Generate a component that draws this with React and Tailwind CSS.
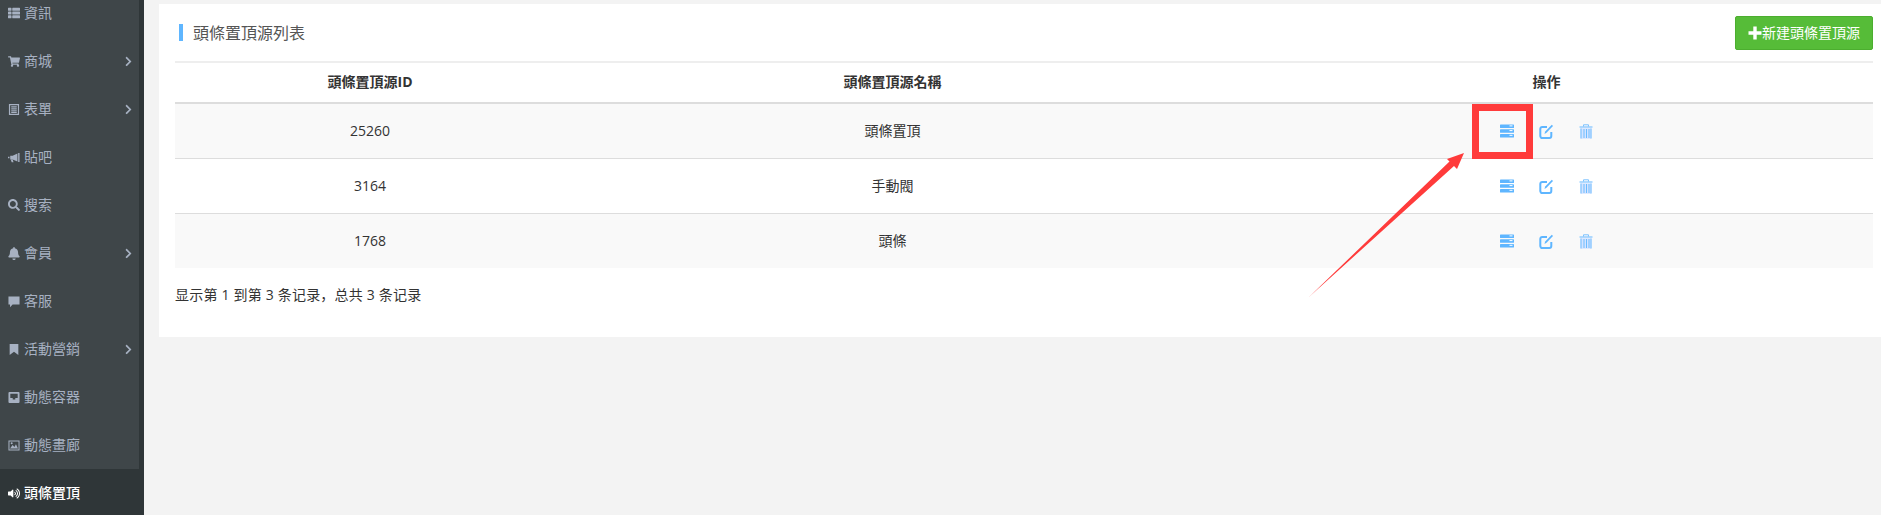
import React from "react";
import { FaThList, FaShoppingCart, FaBell, FaSearch, FaVolumeUp, FaChevronRight } from "react-icons/fa";

const S = ({ children }) => (
  <svg width="13" height="13" viewBox="0 0 13 13" fill="currentColor">{children}</svg>
);

const ListAlt = () => (
  <S>
    <path fillRule="evenodd" d="M1 0.5h11v12H1zM2.3 1.8v9.4h8.4V1.8z" />
    <path d="M3.5 3h6v1.2h-6zM3.5 5.2h6v1.2h-6zM3.5 7.4h6v1.2h-6zM3.5 9.2h6v1h-6z" />
  </S>
);
const Horn = () => (
  <S>
    <path d="M11 1.5h1.5v10H11zM10.2 2.2v8.6L5 8.6H2.4V4.6H5zM0 5.6h1.6v1.8H0zM3 9h2.2l.8 2.6H4z" />
  </S>
);
const Comment = () => (
  <S>
    <path d="M0.5 1h12v8.8H5L2.2 12.6V9.8H0.5z" />
  </S>
);
const Bookmark = () => (
  <S>
    <path d="M1.8 0.5h9.4v12L6.5 9l-4.7 3.5z" />
  </S>
);
const Inbox = () => (
  <S>
    <path fillRule="evenodd" d="M1.6 0.5h9.8a1.1 1.1 0 0 1 1.1 1.1v9.8a1.1 1.1 0 0 1-1.1 1.1H1.6a1.1 1.1 0 0 1-1.1-1.1V1.6a1.1 1.1 0 0 1 1.1-1.1zM2.5 2.5v4.6h2.6v1.6h2.8V7.1h2.6V2.5z" />
  </S>
);
const Picture = () => (
  <S>
    <path fillRule="evenodd" d="M0.5 1h12v11h-12zM1.6 2.1v8.8h9.8V2.1z" />
    <path d="M2.2 9.8 5 6l2 2 1.6-2.8 2.2 4.6z" />
    <circle cx="4" cy="4" r="1.1" />
  </S>
);
const ThList = () => <FaThList size={12} />;
const Cart = () => <FaShoppingCart size={13} />;
const Search = () => <FaSearch size={12} />;
const Bell = () => <FaBell size={13} />;
const Volume = () => <FaVolumeUp size={13} />;

const nav = [
  [ThList, "資訊", false],
  [Cart, "商城", true],
  [ListAlt, "表單", true],
  [Horn, "貼吧", false],
  [Search, "搜索", false],
  [Bell, "會員", true],
  [Comment, "客服", false],
  [Bookmark, "活動營銷", true],
  [Inbox, "動態容器", false],
  [Picture, "動態畫廊", false],
  [Volume, "頭條置頂", false, true],
];

const rows = [
  ["25260", "頭條置頂"],
  ["3164", "手動閥"],
  ["1768", "頭條"],
];

function ServerIcon() {
  return (
    <svg width="14" height="14" viewBox="0 0 14 14">
      <rect x="0" y="0.5" width="14" height="3.6" rx="0.6" fill="#5fb6ff" />
      <rect x="0" y="5.2" width="14" height="3.6" rx="0.6" fill="#5fb6ff" />
      <rect x="0" y="9.9" width="14" height="3.6" rx="0.6" fill="#5fb6ff" />
      <path d="M9.5 1.9h3M9.5 6.6h3M9.5 11.3h3" stroke="#ffffff" strokeWidth="1" />
    </svg>
  );
}

function EditIcon() {
  return (
    <svg width="15" height="15" viewBox="0 0 15 15" fill="none">
      <path d="M8 3H3.2A1.9 1.9 0 0 0 1.3 4.9v7.2A1.9 1.9 0 0 0 3.2 14h7.2a1.9 1.9 0 0 0 1.9-1.9V8" stroke="#5fb6ff" strokeWidth="2" />
      <path d="M5.5 10 6.2 7.5 12.8 0.8 14 2 7.5 8.8z" fill="#5fb6ff" />
    </svg>
  );
}

function TrashIcon() {
  return (
    <svg width="14" height="15" viewBox="0 0 14 15" fill="none">
      <path d="M0.5 3h13" stroke="#7cc2ff" strokeWidth="1.2" />
      <path d="M4.5 2.5V0.8h5v1.7" stroke="#7cc2ff" strokeWidth="1" />
      <path d="M1.5 4.2h11V14a.7.7 0 0 1-.7.7H2.2a.7.7 0 0 1-.7-.7z" fill="#d6e4ff" />
      <path d="M2 4.5V14.5M5 5v9M7.5 5v9M10 5v9M12 4.5V14.5" stroke="#6cbcff" strokeWidth="1" />
    </svg>
  );
}

export default function App() {
  return (
    <div className="relative flex h-[515px] w-[1881px] overflow-hidden bg-[#f3f3f3] font-['Open_Sans','Noto_Sans_CJK_TC',sans-serif] text-sm text-[#333]">
      <aside className="h-full w-[144px] shrink-0 overflow-hidden border-r-[5px] border-[#2f3638] bg-[#3f4649]">
        <ul className="-mt-[11px]">
          {nav.map(([Icon, label, arrow, active]) => (
            <li key={label} className={`flex h-12 items-center pl-2 pr-[7px] ${active ? "bg-[#2f3638] font-medium text-white" : "text-[#a7b1c2]"}`}>
              <span className="flex w-[12px] justify-center">
                <Icon />
              </span>
              <span className="ml-1 text-sm leading-none">{label}</span>
              {arrow && <FaChevronRight className="-mr-[2px] ml-auto text-[#a7b1c2]" size={11} />}
            </li>
          ))}
        </ul>
      </aside>

      <main className="min-w-0 flex-1 pl-[15px] pt-1">
        <section className="h-[333px] bg-white pl-4 pr-2">
          <header className="flex h-[59px] items-center justify-between border-b-2 border-[#eeeeee]">
            <h1 className="ml-1 flex h-[17px] items-center border-l-[4px] border-[#5fb6ff] pl-[10px] text-base font-normal text-[#555]">頭條置頂源列表</h1>
            <button className="flex h-[34px] w-[138px] items-center justify-center rounded-[2px] border border-[#4cae2f] bg-[#56bc38] text-sm text-white">
              <svg width="14" height="14" viewBox="0 0 14 14" fill="currentColor"><path d="M5.3 0.5h3.4v4.8h4.8v3.4H8.7v4.8H5.3V8.7H0.5V5.3h4.8z" /></svg>
              <span>新建頭條置頂源</span>
            </button>
          </header>

          <table className="w-full table-fixed border-collapse">
            <colgroup>
              <col className="w-[390px]" />
              <col className="w-[655px]" />
              <col />
            </colgroup>
            <thead>
              <tr className="h-[40px] border-b-2 border-[#dddddd]">
                <th className="pb-[2px] font-bold">頭條置頂源ID</th>
                <th className="pb-[2px] font-bold">頭條置頂源名稱</th>
                <th className="pb-[2px] font-bold">操作</th>
              </tr>
            </thead>
            <tbody>
              {rows.map(([id, name], i) => (
                <tr key={id} className={`h-[55px] ${i % 2 === 0 ? "bg-[#f9f9f9]" : "bg-white"} ${i < 2 ? "border-b border-[#dddddd]" : ""}`}>
                  <td className="text-center">{id}</td>
                  <td className="text-center">{name}</td>
                  <td className="pl-[280px] pt-[1px]">
                    <div className="flex items-center">
                      <ServerIcon />
                      <span className="ml-[25px]"><EditIcon /></span>
                      <span className="ml-[25px]"><TrashIcon /></span>
                    </div>
                  </td>
                </tr>
              ))}
            </tbody>
          </table>

          <p className="mt-[17px] font-['Open_Sans','Noto_Sans_CJK_SC',sans-serif] text-sm leading-5 tracking-[0.2px] text-[#333]">显示第 1 到第 3 条记录，总共 3 条记录</p>
        </section>
      </main>

      <svg className="pointer-events-none absolute left-0 top-0" width="1881" height="515" viewBox="0 0 1881 515" fill="none">
        <rect x="1475.5" y="107.5" width="54" height="48" stroke="#ff3b3b" strokeWidth="7" />
        <path d="M1309 297 L1449.5 161.5 L1447 159 L1464 153 L1457 169 L1454 166 Z" fill="#ff3b3b" />
      </svg>
    </div>
  );
}
